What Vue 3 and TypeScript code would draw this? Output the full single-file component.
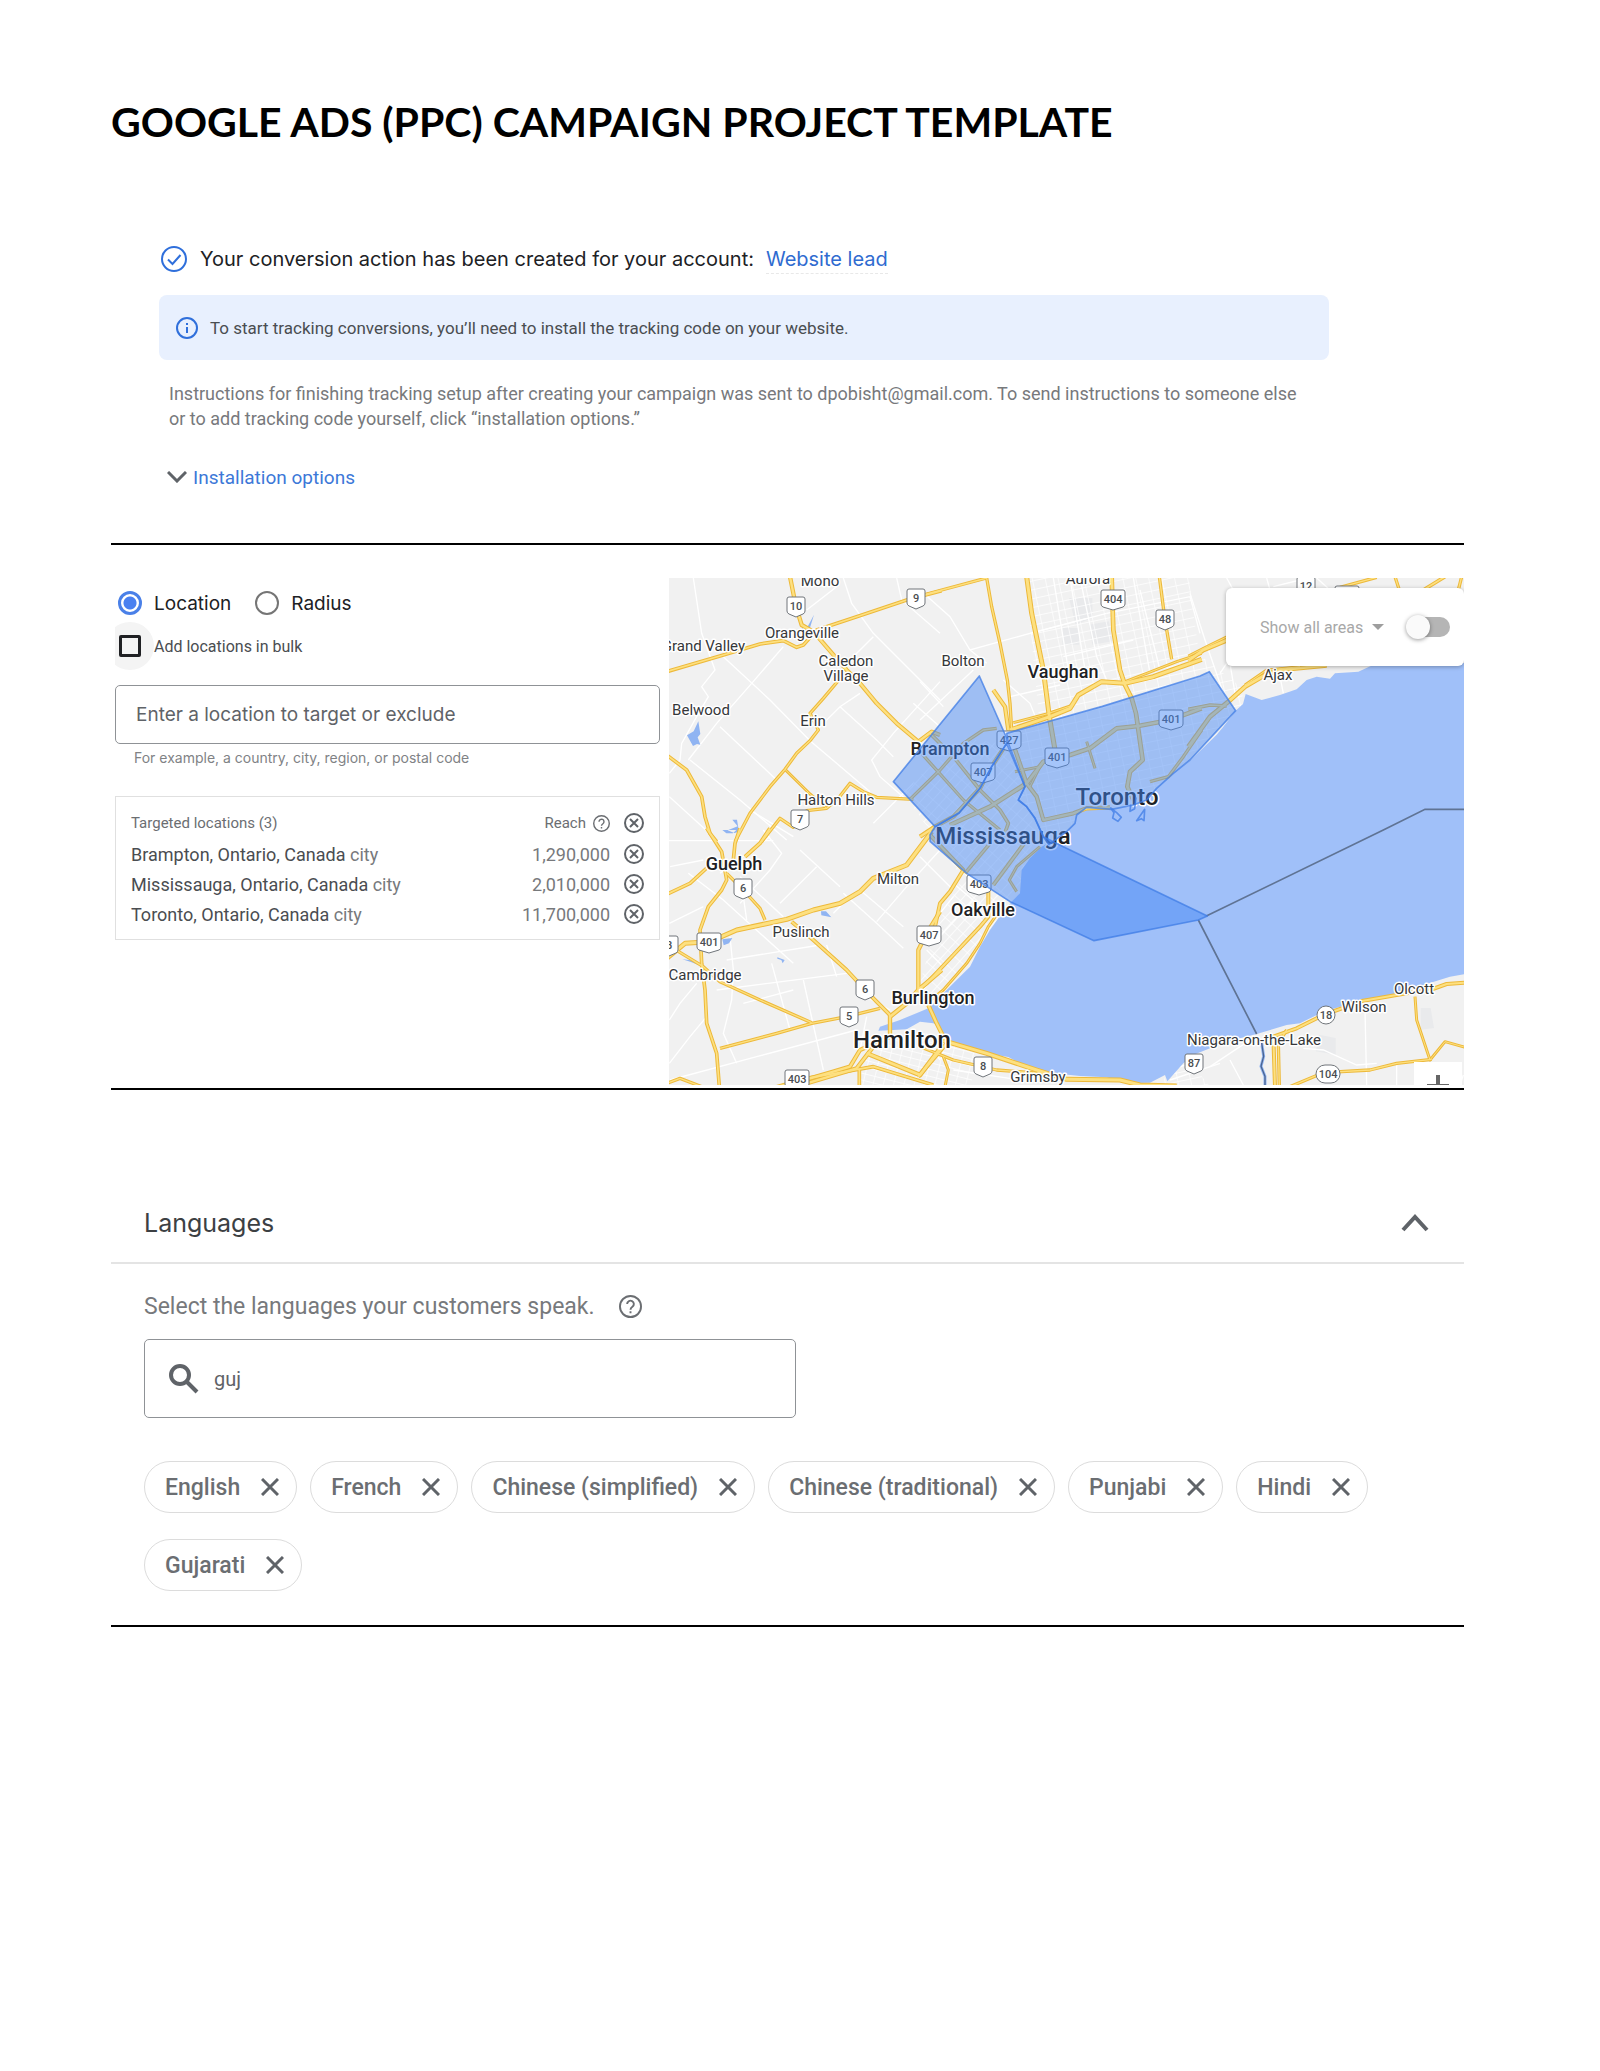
<script setup lang="ts">
import { ref } from 'vue'

interface TargetedLocation { name: string; reach: string }
interface Road { w: number; pts: string }
interface Tile { x: number; y: number; roads: Road[]; streets: string[] }
interface PlaceLabel { text: string; x: number; y: number; size: 's' | 'm' | 'l'; anchor?: string }
interface Shield { text: string; x: number; y: number; round?: boolean }

const mode = ref('location')
const bulk = ref(false)
const place = ref('')
const search = ref('guj')
const area = ref('Show all areas')
const showAreas = ref(false)

const locations: TargetedLocation[] = [
  { name: 'Brampton, Ontario, Canada', reach: '1,290,000' },
  { name: 'Mississauga, Ontario, Canada', reach: '2,010,000' },
  { name: 'Toronto, Ontario, Canada', reach: '11,700,000' },
]

const languages: string[] = [
  'English', 'French', 'Chinese (simplified)', 'Chinese (traditional)', 'Punjabi', 'Hindi', 'Gujarati',
]

// Map geometry is kept in tiles at three units to the pixel.
const tiles: Tile[] = [
  {
    x: -27, y: -24,
    roads: [
      { w: 12, pts: '390,20 408,110 425,165 460,185 525,260 560,300 600,340 650,400 710,460 775,515 815,485 840,495' },
      { w: 10, pts: '845,62 740,90 590,140 470,180 430,225 410,232 370,212 300,222 190,255 20,305' },
      { w: 9, pts: '545,320 490,385 450,430 475,480 450,512 410,550 375,598 330,650 270,730 225,815' },
      { w: 8, pts: '375,598 450,672 500,715' },
      { w: 9, pts: '760,688 650,682 610,665 570,640 535,685 500,715 440,722 400,772 360,745 305,815' },
      { w: 10, pts: '20,555 80,600 125,680 135,740 150,790 170,815' },
    ],
    streets: [
      '100,24 125,190 165,300 125,350 145,380 110,440 65,520 60,570 28,610', '190,260 330,390 450,512 630,665',
      '180,470 350,630', '90,570 240,690 380,810', '28,680 160,800', '370,230 275,340 170,460 85,570',
      '550,24 575,100 640,190 840,390', '640,200 560,280', '840,335 700,490 635,570 660,620 740,690',
      '540,410 650,510 700,560', '760,400 840,470', '600,370 540,410 470,480', '710,24 725,90 840,190', '530,50 440,120',
      '640,760 700,700 760,640', '270,720 400,800',
    ],
  },
  {
    x: 753, y: -24,
    roads: [
      { w: 9, pts: '-2,78 200,24 215,110 240,220 262,330 270,400 275,480' },
      { w: 14, pts: '320,20 335,130 370,300 388,440 405,540' },
      { w: 13, pts: '575,20 580,180 600,300 615,345 635,385 648,430 668,570 630,605 622,650 640,690' },
      { w: 9, pts: '718,20 735,150 755,268' },
      { w: 14, pts: '270,480 390,440 450,415 475,375 545,335 615,340 700,320 845,268' },
      { w: 12, pts: '220,360 255,410 265,480' },
      { w: 8, pts: '280,458 380,432 460,405' },
      { w: 8, pts: '615,335 680,310 770,275 845,250' },
      { w: 13, pts: '845,415 750,450 655,468 590,475 550,505 510,535 450,555 370,575 320,640 210,710 90,765' },
      { w: 8, pts: '500,515 525,595' },
      { w: 12, pts: '265,480 320,640 350,680 370,750 460,730 500,715 570,712' },
      { w: 8, pts: '285,605 360,590 330,650' },
      { w: 10, pts: '30,490 100,560 180,660 240,720 265,760 245,815' },
      { w: 9, pts: '-30,688 60,600 130,520 190,480 230,475' },
      { w: 9, pts: '0,545 130,690 240,780' },
      { w: 9, pts: '690,635 745,620 790,560 845,480' },
      { w: 12, pts: '260,520 215,590 180,655 100,740 45,770 0,800' },
    ],
    streets: [
      '0,60 90,140 150,240 330,190 500,145', '150,240 200,280', '0,335 70,410', '0,450 160,300', '270,380 420,345',
      '330,190 560,130', '560,130 810,80 840,190', '400,24 450,330', '450,24 500,330', '250,330 330,400 350,450',
      '660,60 720,300', '480,24 530,260 560,330', '430,260 640,210', '640,24 690,310',
    ],
  },
  {
    x: 1563, y: -24,
    roads: [
      { w: 13, pts: '-5,272 40,240 112,210' },
      { w: 8, pts: '-5,258 60,225 112,200' },
      { w: 10, pts: '-5,418 60,405 110,408' },
      { w: 13, pts: '-5,530 60,440 115,395 165,350 220,318 270,300 410,286' },
      { w: 8, pts: '165,345 230,300 330,290' },
      { w: 9, pts: '450,52 560,22' }, { w: 9, pts: '615,20 628,60' },
      { w: 10, pts: '700,60 765,20' }, { w: 9, pts: '815,20 805,60' },
    ],
    streets: ['0,70 45,210 100,370', '110,24 130,60', '250,50 330,30', '90,310 110,280', '120,280 135,370', '270,320 280,370', '230,24 240,60', '380,24 420,60'],
  },
  {
    x: -27, y: 756,
    roads: [
      { w: 10, pts: '140,-5 185,65 200,150 185,180 145,230 120,300 125,400 135,480 140,580 170,670 178,770' },
      { w: 10, pts: '240,-5 225,40 220,90' }, { w: 11, pts: '330,-5 300,40 255,80' },
      { w: 10, pts: '20,193 90,160 150,105' },
      { w: 9, pts: '200,130 250,180 300,235 315,270' },
      { w: 14, pts: '20,385 75,340 150,335 230,300 380,268 460,240 540,220 600,185 640,145 740,105 815,5' },
      { w: 11, pts: '395,275 460,330 560,420 620,485 690,555' },
      { w: 9, pts: '40,355 130,410 180,455 300,510 455,578' },
      { w: 9, pts: '180,655 350,610 455,580 560,560 660,535' },
      { w: 13, pts: '690,560 740,520 775,480 845,420' },
      { w: 12, pts: '840,245 800,310 775,360 775,480' },
      { w: 12, pts: '690,555 690,620 600,660 570,710 520,725 440,748' },
      { w: 13, pts: '620,670 780,735 840,655' },
      { w: 12, pts: '440,760 590,715 640,650' },
      { w: 10, pts: '350,770 440,745 640,710 820,765' },
      { w: 10, pts: '598,715 598,770' }, { w: 9, pts: '20,760 60,745 125,770' },
    ],
    streets: [
      '85,130 190,210 400,400', '28,280 130,230', '210,320 220,420 215,510 190,610 230,700', '30,750 290,680 590,600',
      '200,390 480,345', '170,480 560,430', '335,400 390,600', '430,450 490,720', '500,345 530,440', '110,460 60,520 28,570',
      '28,700 90,620 140,560', '240,140 370,260', '310,0 365,70 330,120 240,220', '550,190 650,280 730,355', '470,110 360,220',
      '600,180 730,290', '650,275 740,170 840,60', '250,520 400,480', '520,250 580,190', '420,60 540,170', '620,560 600,660', '30,110 130,90',
      '180,130 330,20', '250,200 260,270', '600,490 690,540', '0,32 340,32',
    ],
  },
  {
    x: 753, y: 756,
    roads: [
      { w: 11, pts: '30,15 130,120 90,185 60,220 45,290' },
      { w: 11, pts: '205,160 205,260 180,290 100,375 20,460 -5,478' },
      { w: 8, pts: '240,240 205,290 180,340 140,400 70,480 20,520' },
      { w: 10, pts: '210,40 135,130' }, { w: 11, pts: '320,30 220,165' },
      { w: 8, pts: '360,50 290,110 268,150 290,185' },
      { w: 12, pts: '25,525 50,580 80,640' },
      { w: 14, pts: '70,632 200,670 350,720 440,748 600,750 660,765 770,768' },
      { w: 9, pts: '-5,648 100,690 230,720 420,735' },
      { w: 11, pts: '-5,740 80,640' }, { w: 8, pts: '70,680 85,720 75,770' },
    ],
    streets: ['0,80 100,180', '20,300 100,200', '50,330 160,210', '750,720 840,690', '750,750 840,720', '100,160 170,220', '20,360 70,410', '100,720 300,750', '0,600 60,690'],
  },
  {
    x: 1563, y: 756,
    roads: [
      { w: 11, pts: '255,770 250,620 320,595 400,555 520,512 650,490 720,480 770,462 826,458' },
      { w: 9, pts: '268,770 265,640 290,600' },
      { w: 8, pts: '675,500 680,570 720,690 765,635 826,652' },
      { w: 9, pts: '725,688 620,700 540,720 400,728 300,770' },
    ],
    streets: ['525,540 530,765', '340,655 400,660 500,705 560,700', '60,710 150,650 200,620', '120,690 160,765', '620,705 620,765', '820,735 810,765', '30,720 90,700'],
  },
]

const labels: PlaceLabel[] = [
  { text: 'Mono', x: 151, y: 8, size: 's' },
  { text: 'Orangeville', x: 133, y: 60, size: 's' },
  { text: 'Grand Valley', x: 76, y: 73, size: 's', anchor: 'end' },
  { text: 'Caledon', x: 177, y: 88, size: 's' },
  { text: 'Village', x: 177, y: 103, size: 's' },
  { text: 'Belwood', x: 32, y: 137, size: 's' },
  { text: 'Erin', x: 144, y: 148, size: 's' },
  { text: 'Halton Hills', x: 167, y: 227, size: 's' },
  { text: 'Bolton', x: 294, y: 88, size: 's' },
  { text: 'Aurora', x: 419, y: 6, size: 's' },
  { text: 'Ajax', x: 609, y: 102, size: 's' },
  { text: 'Milton', x: 229, y: 306, size: 's' },
  { text: 'Puslinch', x: 132, y: 359, size: 's' },
  { text: 'Cambridge', x: 36, y: 402, size: 's' },
  { text: 'Grimsby', x: 369, y: 504, size: 's' },
  { text: 'Niagara-on-the-Lake', x: 585, y: 467, size: 's' },
  { text: 'Wilson', x: 695, y: 434, size: 's' },
  { text: 'Olcott', x: 745, y: 416, size: 's' },
  { text: 'Brampton', x: 281, y: 177, size: 'm' },
  { text: 'Vaughan', x: 394, y: 100, size: 'm' },
  { text: 'Guelph', x: 65, y: 292, size: 'm' },
  { text: 'Oakville', x: 314, y: 338, size: 'm' },
  { text: 'Burlington', x: 264, y: 426, size: 'm' },
  { text: 'Toronto', x: 448, y: 227, size: 'l' },
  { text: 'Mississauga', x: 334, y: 266, size: 'l' },
  { text: 'Hamilton', x: 233, y: 470, size: 'l' },
]

const shields: Shield[] = [
  { text: '10', x: 127, y: 28 }, { text: '9', x: 247, y: 20 }, { text: '404', x: 444, y: 21 },
  { text: '48', x: 496, y: 41 }, { text: '401', x: 502, y: 141 }, { text: '401', x: 388, y: 179 },
  { text: '427', x: 340, y: 162 }, { text: '407', x: 314, y: 194 }, { text: '7', x: 131, y: 241 },
  { text: '12', x: 637, y: 8 }, { text: '', x: 678, y: 17 }, { text: '6', x: 74, y: 310 },
  { text: '401', x: 40, y: 364 }, { text: '8', x: 0, y: 367 }, { text: '407', x: 260, y: 357 },
  { text: '6', x: 196, y: 411 }, { text: '5', x: 180, y: 438 }, { text: '403', x: 128, y: 501 },
  { text: '403', x: 310, y: 306 }, { text: '8', x: 314, y: 488 }, { text: '87', x: 525, y: 485 },
  { text: '18', x: 657, y: 437, round: true }, { text: '104', x: 659, y: 496, round: true },
]

function halfWidth(s: Shield): number {
  return s.text.length === 3 || s.text === '' ? 12 : 9
}
function shieldPath(s: Shield): string {
  const h = halfWidth(s)
  return `M${-h} -7q0 -2 2 -2H${h - 2}q2 0 2 2V5q0 2 -2 3L0 11L${2 - h} 8q-2 -1 -2 -3z`
}

const lake = '2385,255 2110,262 2068,281 1998,286 1983,302 1943,296 1913,306 1883,334 1833,351 1778,366 1730,348 1722,378 1700,398 1663,446 1643,470 1563,548 1513,586 1463,631 1433,666 1393,681 1328,694 1253,688 1223,711 1218,736 1193,761 1153,786 1118,806 1083,841 1058,876 1053,946 1028,971 988,1021 963,1056 933,1106 903,1166 853,1216 813,1256 778,1291 753,1301 693,1326 633,1346 628,1358 673,1356 713,1354 753,1331 793,1336 813,1346 833,1386 923,1421 1018,1437 1063,1461 1153,1486 1233,1494 1313,1498 1373,1516 1443,1514 1488,1491 1495,1510 1543,1456 1580,1428 1623,1411 1713,1381 1763,1368 1853,1341 1893,1336 1963,1301 2083,1266 2183,1246 2263,1221 2343,1196 2385,1189'
const brampton = '931,294 1013,480 1013,496 968,566 933,631 870,705 798,746 673,611'
const toronto = '1013,466 1300,385 1593,294 1621,281 1700,398 1563,546 1513,586 1463,631 1433,666 1393,681 1328,694 1253,688 1223,711 1218,736 1193,761 1140,800 1123,776 1098,721 1073,686 1048,666 1068,626 1018,496'
const mississauga = '1013,496 968,566 933,631 870,705 798,746 783,771 783,790 893,886 1023,971 1275,1088 1588,1026 1615,1014 1183,806 1123,776 1098,721 1073,686 1048,666 1068,626'
</script>

<template>
  <main class="page">
    <h1>GOOGLE ADS (PPC) CAMPAIGN PROJECT TEMPLATE</h1>

    <section class="conversion">
      <p class="created">
        <svg class="i-check" viewBox="0 0 28 28" aria-hidden="true">
          <circle cx="14" cy="14" r="12" /><path d="M8 14.500l4.500 4.500 8-9" />
        </svg>
        <span>Your conversion action has been created for your account:</span>
        <a href="#lead">Website lead</a>
      </p>
      <div class="banner">
        <svg class="i-info" viewBox="0 0 24 24" aria-hidden="true">
          <circle cx="12" cy="12" r="10" /><path d="M12 11v6M12 7v2" />
        </svg>
        <span>To start tracking conversions, you’ll need to install the tracking code on your website.</span>
      </div>
      <p class="instructions">
        Instructions for finishing tracking setup after creating your campaign was sent to dpobisht@gmail.com. To send instructions to someone else<br>
        or to add tracking code yourself, click “installation options.”
      </p>
      <button class="install" type="button">
        <svg viewBox="0 0 20 12" aria-hidden="true"><path d="M1 1l9 9 9-9" /></svg>
        Installation options
      </button>
    </section>

    <hr class="rule rule-first">

    <section class="targeting">
      <div class="controls">
        <div class="modes">
          <label><input v-model="mode" type="radio" name="mode" value="location">Location</label>
          <label><input v-model="mode" type="radio" name="mode" value="radius">Radius</label>
        </div>
        <label class="bulk"><span class="halo"><input v-model="bulk" type="checkbox"></span>Add locations in bulk</label>
        <input v-model="place" class="place" type="text" placeholder="Enter a location to target or exclude" aria-label="Enter a location to target or exclude" aria-describedby="place-hint">
        <p id="place-hint" class="hint">For example, a country, city, region, or postal code</p>
        <div class="targets">
          <table>
            <thead>
              <tr>
                <th scope="col">Targeted locations (3)</th>
                <th scope="col" class="reach">
                  <span>Reach</span>
                  <svg class="i-help" viewBox="0 0 24 24" aria-hidden="true">
                    <circle cx="12" cy="12" r="11" /><path d="M8.500 9.500a3.500 3.500 0 1 1 5.500 2.800c-1.500 1-2 1.500-2 3M12 17v2" />
                  </svg>
                </th>
                <th scope="col" class="act">
                  <button type="button" class="remove" aria-label="Remove all"><svg viewBox="0 0 20 20"><circle cx="10" cy="10" r="9" /><path d="M6 6l8 8M14 6l-8 8" /></svg></button>
                </th>
              </tr>
            </thead>
            <tbody>
              <tr v-for="l in locations" :key="l.name">
                <td>{{ l.name }} <span class="kind">city</span></td>
                <td class="reach">{{ l.reach }}</td>
                <td class="act">
                  <button type="button" class="remove" :aria-label="'Remove ' + l.name"><svg viewBox="0 0 20 20"><circle cx="10" cy="10" r="9" /><path d="M6 6l8 8M14 6l-8 8" /></svg></button>
                </td>
              </tr>
            </tbody>
          </table>
        </div>
      </div>

      <div class="map">
        <svg class="canvas" viewBox="0 0 795 507" preserveAspectRatio="xMinYMin slice" role="img" aria-label="Map of targeted areas">
          <defs>
            <pattern id="grid" width="38" height="26" patternUnits="userSpaceOnUse" patternTransform="rotate(-12)">
              <path d="M0 0H38M0 0V26" />
            </pattern>
            <pattern id="grid-slant" width="34" height="24" patternUnits="userSpaceOnUse" patternTransform="rotate(-48)">
              <path d="M0 0H34M0 0V24" />
            </pattern>
            <pattern id="grid-south" width="30" height="20" patternUnits="userSpaceOnUse" patternTransform="rotate(14)">
              <path d="M0 0H30M0 0V20" />
            </pattern>
          </defs>
          <g transform="scale(0.333333)">
            <rect width="2385" height="1521" class="land" />
            <path class="town" d="M1200 60h70v60l-50 20zM1260 140l60-10 10 60-60 10zM1180 150h50v50h-50zM1950 1370l50 10v50l-60-10zM2255 1290h30l10 60-40 5z" />
            <polygon points="1070,0 1560,0 1590,230 1720,330 1722,380 1463,631 1130,790 1050,640 1020,450 1110,420" fill="url(#grid)" />
            <polygon points="880,480 1020,500 1100,760 1053,946 988,1021 813,1256 740,1260 800,1050 880,900 700,640" fill="url(#grid-slant)" />
            <polygon points="600,1400 760,1360 950,1440 900,1521 560,1521" fill="url(#grid-south)" />
            <polygon points="1490,1490 1560,1450 1620,1521 1480,1521" fill="url(#grid)" />
            <g v-for="(t, i) in tiles" :key="'s' + i" :transform="`translate(${t.x} ${t.y})`">
              <polyline v-for="(s, j) in t.streets" :key="j" :points="s" class="street" />
            </g>
            <polygon :points="lake" class="water" />
            <path class="pond" d="M435 110l-18 34-14 0-5 10 10 8 12-4zM88 430l-14 30-20 12 10 18 8 14 12-6 10 2-8-22 8-10zM190 725l16 20-30 12 20 8 14-4-6-36zM160 756h42l-10 10h-20zM456 1000l15 0 16 18-30-6zM160 1084l30-4-10 16-16 6zM40 1144l40 4 16 16-30-12zM325 1138l22 8-6 10-4-10-12-4z" />
            <path class="boundary" d="M1612 1014L2143 756L2268 694H2385M1588 1026L1763 1368" />
            <g v-for="(t, i) in tiles" :key="'c' + i" :transform="`translate(${t.x} ${t.y})`">
              <polyline v-for="(r, j) in t.roads" :key="j" :points="r.pts" class="casing" :stroke-width="r.w + 1" />
            </g>
            <g v-for="(t, i) in tiles" :key="'r' + i" :transform="`translate(${t.x} ${t.y})`">
              <polyline v-for="(r, j) in t.roads" :key="j" :points="r.pts" class="core" :stroke-width="r.w - 5" />
            </g>
            <path class="river" d="M1778 1395l6 40-8 30 12 30 0 26" />
            <path class="river-edge" d="M1778 1395l6 40-8 30 12 30 0 26" />
          </g>
          <g v-for="(s, i) in shields" :key="'h' + i" :transform="`translate(${s.x} ${s.y})`">
            <rect v-if="s.round" class="shield" :x="-halfWidth(s)" y="-9" :width="halfWidth(s) * 2" height="18" rx="9" />
            <path v-else class="shield" :d="shieldPath(s)" />
            <text v-if="s.text" y="4" class="number">{{ s.text }}</text>
          </g>
          <text v-for="l in labels" :key="l.text" :x="l.x" :y="l.y" :class="['place-name', 'size-' + l.size]" :text-anchor="l.anchor || 'middle'">{{ l.text }}</text>
          <g transform="scale(0.333333)" class="areas">
            <polygon :points="mississauga" />
            <polygon :points="brampton" />
            <polygon :points="toronto" />
            <path class="island" d="M1325 690l10 14-4 16 16 10 10-12-14-14zM1403 728l24-34-2 34-8-6zM1385 680l-2 20 14-8 4-34" />
          </g>
        </svg>
        <div class="map-card">
          <span class="area-select">
            <select v-model="area" aria-label="Areas shown"><option>Show all areas</option></select>
            <svg viewBox="0 0 12 6" aria-hidden="true"><path d="M0 0h12l-6 6z" /></svg>
          </span>
          <input v-model="showAreas" class="switch" type="checkbox" aria-label="Show areas on the map">
        </div>
        <button class="zoom-in" type="button" aria-label="Zoom in">
          <svg viewBox="0 0 24 24"><path d="M12 1v22M1 12h22" /></svg>
        </button>
      </div>
    </section>

    <hr class="rule rule-second">

    <section class="languages">
      <header>
        <h2>Languages</h2>
        <button type="button" aria-label="Collapse languages"><svg viewBox="0 0 28 18"><path d="M2 16L14 3l12 13" /></svg></button>
      </header>
      <div class="body">
        <div class="prompt">
          <label for="language-search">Select the languages your customers speak.</label>
          <svg class="i-help" viewBox="0 0 24 24" aria-hidden="true">
            <circle cx="12" cy="12" r="11" /><path d="M8.500 9.500a3.500 3.500 0 1 1 5.500 2.800c-1.500 1-2 1.500-2 3M12 17v2" />
          </svg>
        </div>
        <div class="search">
          <svg viewBox="0 0 30 30" aria-hidden="true"><circle cx="11" cy="11" r="9" /><path d="M17.500 17.500L28 28" /></svg>
          <input id="language-search" v-model="search" type="text">
        </div>
        <ul class="chips">
          <li v-for="l in languages" :key="l">
            {{ l }}
            <button type="button" :aria-label="'Remove ' + l"><svg viewBox="0 0 18 18"><path d="M1 1l16 16M17 1L1 17" /></svg></button>
          </li>
        </ul>
      </div>
    </section>

    <hr class="rule rule-third">
  </main>
</template>

<style>
body { margin: 0; background: #fff; }
</style>

<style scoped>
* { box-sizing: border-box; }
.page {
  padding: 97px 136px 80px 111px;
  font-family: Roboto, "Liberation Sans", sans-serif;
  color: #5f6368;
}
p, h1, h2, ul { margin: 0; padding: 0; }
button { padding: 0; border: 0; background: none; font: inherit; color: inherit; display: flex; align-items: center; justify-content: center; cursor: pointer; }
svg { display: block; fill: none; flex: none; }
h1 { font: 700 41px/50px Lato, "Liberation Sans", sans-serif; color: #000; white-space: nowrap; }
.rule { height: 2px; border: 0; background: #000; margin: 0; }
.rule-first { margin: 53px 0 33px; }
.rule-second { margin-top: 3px; }
.rule-third { margin-top: 34px; }

.conversion { padding: 98px 135px 0 48px; }
.created { display: flex; align-items: center; height: 28px; padding-left: 1px; font-family: Inter, Roboto, sans-serif; font-size: 20px; color: #202124; white-space: nowrap; }
.created span { margin: 0 12px; }
.created a { color: #2f6bd0; text-decoration: none; line-height: 28px; border-bottom: 1px dashed #e8e8e8; }
.i-check { width: 28px; height: 28px; stroke: #2f6fdb; stroke-width: 2; }
.banner { display: flex; align-items: center; gap: 11px; height: 65px; margin-top: 22px; padding-left: 16px; border-radius: 8px; background: #e8f0fe; font-size: 17px; color: #4a4d51; }
.i-info { width: 24px; height: 24px; stroke: #2f6fdb; stroke-width: 2; }
.instructions { margin: 21px 0 34px 10px; font-size: 18px; line-height: 25px; color: #77797c; white-space: nowrap; }
.install { gap: 6px; height: 24px; margin-left: 8px; font-size: 19px; color: #3c78d8; }
.install svg { width: 20px; height: 12px; stroke: #5f6368; stroke-width: 3; }
.conversion { padding-bottom: 1px; }

.targeting { display: grid; grid-template-columns: 549px minmax(0, 1fr); column-gap: 9px; }
.controls { padding: 11px 0 0 4px; }
.modes { display: flex; gap: 24px; height: 28px; font-family: Inter, Roboto, sans-serif; font-size: 19px; color: #202124; }
.modes label { display: flex; align-items: center; gap: 12px; }
.modes input { appearance: none; width: 24px; height: 24px; margin: 0; border: 2px solid #757575; border-radius: 50%; }
.modes label:first-child { padding-left: 3px; }
.modes input:checked { border: 3px solid #4a80e8; background: radial-gradient(circle, #4a80f0 6px, #fff 7px); }
.bulk { display: flex; align-items: center; height: 48px; margin-top: 5px; font-size: 16px; color: #4a4d51; overflow: hidden; }
.halo { display: grid; place-items: center; width: 48px; height: 48px; margin: 0 0 0 -9px; border-radius: 50%; background: #f4f4f4; }
.bulk input { appearance: none; width: 22px; height: 22px; margin: 0; border: 3px solid #202124; border-radius: 2px; }
.place { display: block; width: 100%; height: 59px; margin-top: 15px; padding: 0 20px; border: 1px solid #8f9296; border-radius: 5px; background: #fff; font: 19px Inter, Roboto, sans-serif; color: #5f6368; }
.place::placeholder { color: #5f6368; opacity: 1; }
.hint { margin: 5px 0 29px 19px; font-family: Inter, Roboto, sans-serif; font-size: 14px; line-height: 18px; color: #808285; }
.targets { border: 1px solid #e0e0e0; padding: 9px 13px 10px 15px; height: 144px; }
table { width: 100%; border-collapse: collapse; font-size: 17px; }
th, td { padding: 0; height: 30px; text-align: left; font-weight: 400; color: #4a4d51; }
th { height: 33px; font-size: 15px; color: #6b6e72; }
tbody { font-size: 18px; }
.kind, td.reach { color: #77797c; }
.reach { text-align: right; }
.reach span { vertical-align: middle; }
.reach .i-help { display: inline-block; width: 17px; height: 17px; margin-left: 7px; vertical-align: middle; }
.act { width: 36px; }
.act button { margin-left: auto; margin-right: 2px; }
.remove svg { width: 20px; height: 20px; stroke: #5f6368; stroke-width: 2; }
.i-help { stroke: #6b6e72; stroke-width: 2; }

.map { position: relative; height: 507px; overflow: hidden; }
.canvas { width: 100%; height: 100%; }
.land { fill: #f1f1f1; }
.town { fill: #e9eaec; }
pattern path { stroke: #fff; stroke-width: 4; }
.street { stroke: #fff; stroke-width: 4; }
.water { fill: #a0c0f9; }
.pond { fill: #90b4f2; }
.boundary { stroke: #5f7394; stroke-width: 5; }
.casing { stroke: #edb93a; stroke-linejoin: round; }
.core { stroke: #fde080; stroke-linejoin: round; }
.river { stroke: #90b4f2; stroke-width: 9; }
.river-edge { stroke: #4a6490; stroke-width: 4; }
.shield { fill: #fff; stroke: #70757a; stroke-width: 1; }
.number { font-size: 11px; font-weight: 500; fill: #4a4d51; text-anchor: middle; }
.place-name { fill: #35373a; stroke: #fff; stroke-width: 3px; stroke-linejoin: round; paint-order: stroke; }
.size-s { font-size: 15px; }
.size-m { font-size: 18px; font-weight: 500; fill: #202124; }
.size-l { font-size: 24px; font-weight: 500; fill: #202124; }
.areas { fill: #4285f4; fill-opacity: 0.48; stroke: #3f7ce6; stroke-opacity: 0.75; stroke-width: 5; stroke-linejoin: round; }
.areas .island { fill: none; stroke-width: 5; }
.map-card { position: absolute; top: 10px; right: 0; display: flex; align-items: center; justify-content: space-between; width: 238px; height: 78px; padding: 0 14px 0 34px; border-radius: 6px; background: #fff; box-shadow: 0 1px 4px rgba(0, 0, 0, 0.3); }
.area-select { display: flex; align-items: center; gap: 8px; }
.area-select svg { width: 12px; height: 6px; fill: #9e9e9e; }
select { appearance: none; padding: 0; border: 0; background: none; font: 16px Roboto, "Liberation Sans", sans-serif; color: #a8a8a8; }
.switch { appearance: none; position: relative; width: 38px; height: 20px; margin: 0; border-radius: 10px; background: #b5b5b5; }
.switch::before { content: ""; position: absolute; left: -6px; top: -2px; width: 24px; height: 24px; border-radius: 50%; background: #fafafa; box-shadow: 0 1px 4px rgba(0, 0, 0, 0.4); }
.zoom-in { position: absolute; right: 2px; top: 484px; width: 48px; height: 48px; background: #fff; }
.zoom-in svg { width: 24px; height: 24px; stroke: #666; stroke-width: 4; }

.languages header { display: flex; align-items: center; justify-content: space-between; height: 80px; margin-top: 94px; padding: 0 35px 0 33px; border-bottom: 2px solid #e4e4e4; }
h2 { font-family: Inter, Roboto, sans-serif; font-size: 25px; font-weight: 400; color: #3c4043; }
header svg { width: 28px; height: 18px; stroke: #5f6368; stroke-width: 4; }
.body { padding: 26px 60px 0 33px; }
.prompt { display: flex; align-items: center; gap: 24px; height: 32px; font-size: 23px; color: #77797c; }
.prompt .i-help { width: 23px; height: 23px; }
.search { display: flex; align-items: center; gap: 15px; max-width: 652px; height: 79px; margin-top: 17px; padding: 0 24px; border: 1px solid #8f9296; border-radius: 5px; }
.search svg { width: 30px; height: 30px; stroke: #5f6368; stroke-width: 4; }
.search input { flex: 1; min-width: 0; padding: 0; border: 0; outline: 0; background: none; font: 20px Roboto, "Liberation Sans", sans-serif; color: #5f6368; }
.chips { display: flex; flex-wrap: wrap; gap: 26px 13px; margin-top: 43px; list-style: none; }
.chips li { display: flex; align-items: center; gap: 21px; height: 52px; padding: 0 17px 0 20px; border: 1px solid #dcdcdc; border-radius: 26px; font-size: 23px; font-weight: 500; color: #6b6e72; white-space: nowrap; }
.chips svg { width: 18px; height: 18px; stroke: #5f6368; stroke-width: 3; }
</style>
